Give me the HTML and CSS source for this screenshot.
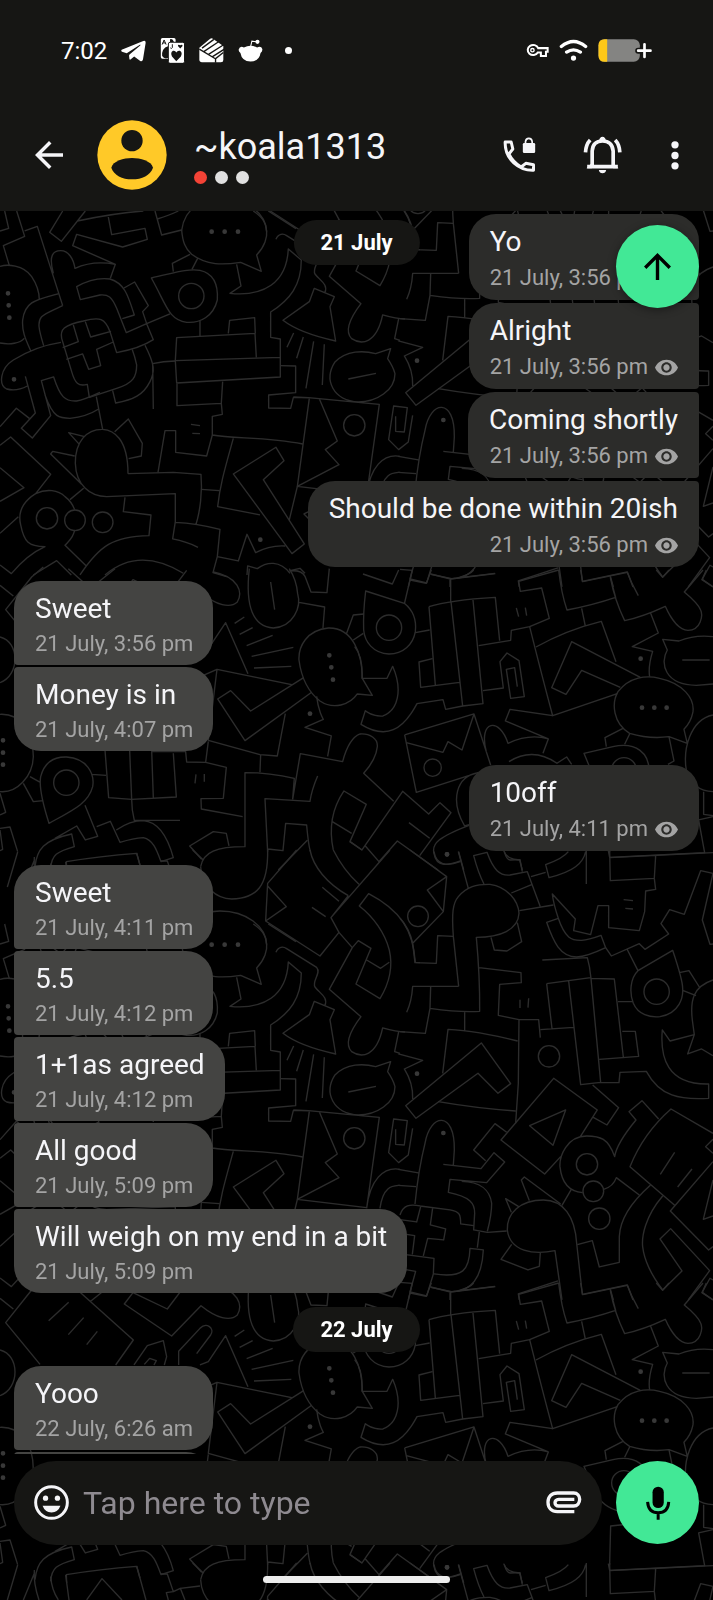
FILE: index.html
```
<!DOCTYPE html>
<html lang="en">
<head>
<meta charset="utf-8">
<meta name="viewport" content="width=device-width, initial-scale=1">
<title>~koala1313</title>
<link rel="stylesheet" href="styles.css">
</head>
<body>
<svg class="wallpaper" aria-hidden="true">
  <defs>
    <g id="doodles" class="doodles">
      <g transform="translate(0 205) scale(.3333)">
        <path d="M50 18L74 94L10 122L28 182M14 18L26 70L0 78M74 78L112 64L188 302M188 18L149 82L184 109L256 18M232 48Q340 25 430 18M465 18L485 90L545 75M472 42Q510 30 535 18M325 36L335 89L435 70L442 103L368 126L230 88L218 122L346 178L331 220M160 205C145 150 160 137 182 137C205 137 220 160 225 190Q280 165 346 178"/>
        <path d="M545 75C548 110 555 130 575 148C620 182 670 180 722 172L784 199L770 150C795 125 802 95 800 80C798 50 785 35 760 18M570 148L517 175L520 200M593 160L576 193M710 178L723 243L690 265C790 275 860 235 865 132L904 165C904 240 870 285 812 321L812 397L841 402L841 516L530 534L526 467L530 398L765 385M526 467L841 457M765 385L769 457M685 385L689 346L764 338L766 385M600 347L600 392"/>
        <path d="M454 219C520 205 560 190 600 196C640 205 655 240 652 285C640 335 600 355 560 352C505 345 500 300 454 219Z"/><circle cx="574" cy="273" r="38"/>
        <path d="M372 249L404 231L445 302L428 320L440 356L379 383L350 310C335 275 325 268 300 270L241 284L230 245C265 225 300 218 330 222C375 235 385 275 403 330L367 341M440 356L510 327M440 356L460 404Q420 430 350 443L330 380C315 340 300 335 250 348C190 360 180 375 185 400L215 500C225 535 235 545 262 538L268 577L350 550C400 535 410 515 410 480Q405 455 397 434M435 421C465 480 465 500 450 530C430 570 400 585 347 594L338 557M460 612L458 476Q490 468 526 468"/>
        <path d="M531 536L531 602L664 595L668 530M664 595L667 628L637 634L637 690L620 753L527 742L527 677L495 677L474 802M573 658L600 662M577 685L600 686M637 690C700 702 800 695 908 717M841 482L887 483L887 563L806 570L806 609L872 610L880 578L925 578M928 580L892 845L868 945M700 700C675 790 660 840 653 905L780 930M828 727L852 767L790 824L913 1017L876 1046L700 807ZM604 853L658 857"/>
        <path d="M384 806C384 700 340 675 308 673C260 672 225 710 226 775C228 840 270 875 320 875L526 866L526 950L518 1002Q560 1010 594 1027M384 806L520 802L603 808C608 860 600 920 588 958M526 952Q590 955 660 973L652 1055L715 1068L741 988L767 1043Q810 1020 856 1023M652 1055L639 1103L680 1115M254 695L206 683L236 716M224 753L158 739L152 747L245 838M344 680L385 642L427 715L424 753L386 761M308 673L289 575"/>
        <path d="M92 437C78 405 65 380 68 345C75 290 105 285 176 266M131 422C115 370 112 350 125 335C135 325 160 315 188 302M0 184C20 178 70 178 95 215C115 245 118 265 118 285M0 414C30 420 60 415 73 400M183 412C130 420 80 440 40 465C0 490 -5 540 20 552Q50 560 82 543M76 514L106 624L64 670L97 699L152 632L124 527L161 516C180 575 195 590 230 588Q250 585 300 562M135 570C160 640 180 640 210 640Q260 635 296 612M220 360L235 410L188 428M199 463L248 447L266 493L302 482L290 433L340 411M256 350L272 396L333 379"/>
        <path d="M0 665L49 610L89 641M0 721L32 696L152 808L107 866M0 788L72 848L0 889M107 866C140 850 175 855 195 875Q215 890 224 914M107 866C60 895 55 930 62 960C72 1010 85 1025 135 1025C90 1045 60 1075 34 1106L0 1080M224 975C220 1000 205 1010 195 1021L259 1083M210 884L251 850M55 935L0 985M375 877L370 920L453 930L447 992C340 995 300 1020 240 1110M100 1110L170 1067L214 1110M315 1110C380 1055 460 1050 550 1105M741 1110L743 1083L772 1091C800 1070 840 1065 870 1105M870 1097L900 1090L915 1105M960 975L912 927L937 915M805 18L888 71"/>
        <circle cx="141" cy="940" r="32"/><circle cx="225" cy="946" r="31"/><circle cx="308" cy="952" r="31"/>
        <path d="M828 103C835 85 850 85 860 92L950 148C965 165 935 190 945 207C960 227 985 237 975 262M943 250L928 290L849 346Q900 385 1007 408L990 305L1003 275ZM881 384L861 427M910 396L890 460M941 409L918 550M973 418L967 540"/>
        <path class="dots" d="M635 80h.1M674 80h.1M714 80h.1M24 265h.1M26 301h.1M28 338h.1M42 523h.1M781 1004h.1"/>
      </g>
      <g transform="translate(0 137) scale(.3333)">
        <path d="M545 280C555 205 620 183 660 183C740 183 798 230 800 284M1168 337L1142 355L1100 330M1057 293L1075 272L1113 295L1068 402L1140 446C1180 380 1175 330 1168 300C1155 250 1120 200 1078 168L1106 131C1200 180 1240 240 1246 337L1260 338M1017 247L1057 293L988 418L1083 500C1045 550 1035 585 1055 605C1085 625 1130 620 1148 534Q1190 546 1215 546M1045 137L993 203L1017 247L960 318L797 213L803 100L890 0M803 108L859 170L797 213M993 203L1170 0M967 112L1017 154M936 172L977 200M930 0C940 50 980 100 1045 137M1000 0Q1030 60 1077 103"/>
        <path d="M1196 546L1184 605L1200 610M1172 635L1127 650C1090 640 1040 640 1005 675C970 730 1000 790 1075 795C1130 795 1185 760 1185 710Q1180 690 1163 665ZM1045 726L1128 709M880 780L925 782L1138 802L1100 1075M958 785L1012 912L976 938L1017 983L892 1048L1100 1073M1187 838L1187 883L1213 885L1222 812L1181 807L1166 908L1196 938L1225 915L1238 835M1100 1075C1110 990 1150 950 1200 958M1140 1075C1150 1005 1180 1008 1200 1006"/>
        <circle cx="1063" cy="865" r="32"/>
        <path d="M803 0C805 110 770 145 695 147C650 147 605 110 602 50M578 0L610 30"/>
      </g>
      <g id="doodles-right" transform="translate(400 850) scale(.3333)">
        <path d="M30 0L140 80L130 185L38 280M140 80L82 120L130 185M0 205Q28 235 38 280L45 338L109 340L113 257L160 259M102 5C108 45 140 50 180 35M175 5L205 115M252 102Q235 70 221 17L261 7C280 60 300 78 330 75L382 65L421 170M313 5Q320 30 330 30L360 29L367 65M334 129L395 104M393 80L437 67M505 5Q490 25 437 44L447 83C520 65 550 40 557 5M559 0L559 102M629 0L631 92L763 85L767 18M629 23L939 8"/>
        <circle cx="54" cy="199" r="31"/>
        <path d="M763 85L767 118L737 123L734 185L718 242L626 233L626 167L594 167L572 254L521 242L526 207L457 132Q460 160 475 205C495 265 515 272 545 271Q565 270 603 256L617 293L634 318L718 281L735 298L806 252L783 221L809 179L853 193L902 62L939 70M671 149L699 152M676 175L699 177M939 70L907 210L930 283L939 282M475 205L440 217C460 275 480 320 530 321Q560 320 617 293M358 182L460 165"/>
        <path d="M176 409L160 259C155 190 158 160 175 140C200 110 230 102 270 103C320 110 355 150 357 190C355 240 300 262 229 262Q240 380 239 484Q180 488 90 475L92 410M176 409L38 409Q35 455 20 487M90 475L76 550L0 545M194 486L194 541M273 262L283 300L321 303L365 275L352 218M237 353L363 368L364 398L299 403L295 496L357 509L416 509L421 563M360 449L360 474M386 445L384 473M357 509L355 700L347 820M128 670L144 538Q230 542 353 573M115 755Q230 775 347 783M17 767L244 579L332 701L294 730L234 670L48 805ZM-5 612L68 631L13 657Q40 700 38 747"/>
        <path d="M427 330L562 323Q570 350 573 385L643 387L670 621M440 401L572 383M440 401L456 535M421 539L521 532M506 393L542 704L602 697L573 385M598 628L716 619L706 544L667 544M602 698L657 698L660 667L739 664C780 740 840 750 926 745L926 702C800 705 780 620 787 540L810 573L883 554M654 455L699 455M681 297L714 362M818 301L714 362C690 385 688 430 700 460C715 495 750 503 780 500C840 490 850 440 848 415Q848 390 818 301ZM838 368L867 362L900 414M850 422L888 437M939 390C880 410 870 450 877 510L883 554L863 612L905 597L939 617"/>
        <circle cx="447" cy="619" r="32"/><circle cx="770" cy="425" r="38"/>
        <path d="M541 860L592 780L461 685L303 870L434 972L482 920M497 780L459 886L389 827ZM578 705L656 773L621 825L580 802M776 807L726 752L687 785L708 810Q650 880 644 920C625 865 600 858 560 858C500 858 478 920 480 950C485 1000 510 1025 548 1028M611 1018Q640 1010 649 983L718 1035M939 850L813 777Q730 850 690 950L824 1066M824 907L781 973M876 957L833 1011M939 935L811 1083L926 1200L939 1190M939 990L910 1108L939 1098M939 868L917 890L939 910M751 1006C690 1060 660 1110 658 1160L658 1237L598 1251L577 1172L532 1184M788 1038C735 1100 725 1160 728 1190Q735 1250 788 1320L846 1263L780 1167L812 1136L929 1262L865 1350M939 1290L930 1285L906 1328L939 1350"/>
        <circle cx="561" cy="943" r="32"/><circle cx="580" cy="1024" r="31"/><circle cx="598" cy="1106" r="32"/>
        <path d="M486 1350L465 1202C400 1215 330 1205 322 1140C320 1090 360 1050 430 1050C490 1050 525 1100 530 1180L547 1333L682 1305L699 1350M474 1293L355 1332L358 1350M631 1318L640 1350M486 1066L514 1018M388 1052L364 990L373 981L482 1062M334 1087L317 1046L356 1070M335 1183L303 1228L384 1260L418 1249L421 1209M320 847L285 821L221 900L257 932"/>
        <path d="M45 1062Q55 960 75 880C90 790 165 780 163 900L160 945M130 943L243 956L282 908L314 936L260 998L150 988L145 1027C210 1040 225 1060 224 1090L221 1140L262 1147L320 1143M185 994C240 995 270 1020 275 1060Q275 1095 262 1144M-5 958L55 969M-5 1006L48 1010M0 1095C10 1065 30 1062 60 1068L150 1080C180 1085 182 1095 182 1122L221 1127M0 1109L50 1116L62 1070M98 1074L91 1125L137 1137L131 1170L83 1165L70 1218M0 1150L44 1157L37 1213M0 1212L102 1225L100 1272L80 1338L30 1326L47 1264L0 1256M238 1146L232 1193M102 1272C190 1285 208 1260 210 1195L250 1200C245 1300 200 1325 155 1325L93 1312M155 1325L285 1309M150 1328L150 1350M0 1297L37 1300L25 1350"/>
        <path class="dots" d="M141 13h.1M51 671h.1M130 849h.1"/>
      </g>
      <g transform="translate(0 567) scale(.3333)">
        <path d="M0 55L40 87M120 253L17 128L95 30L130 0M205 5L400 180L347 255M270 65L345 5M206 67L146 122M251 113L205 164M292 154L260 194M560 10L502 87L399 38L373 72L515 168L603 77C650 115 690 125 712 105C730 75 715 30 640 15M536 255L536 214L600 145C620 125 645 145 632 165L590 221M402 255L442 197L490 182L500 230L493 255M433 253L449 235L469 242L462 255M0 210C60 225 60 325 0 347M600 255L625 245L677 167L744 320M733 150L704 169M758 182L719 202M818 205L740 236M880 241L755 268M874 298L762 303M610 325L651 307L875 353M651 307L625 520L780 563L832 567L856 440M911 332L752 432L692 371L653 396L735 521L935 376M950 388Q955 430 970 457L915 481L994 507L983 568"/>
        <path d="M748 5C735 120 760 180 820 183C880 180 905 120 893 80Q890 40 868 5M812 45L824 128M868 12Q905 8 915 28L933 75L981 77L988 5M897 106L974 120L969 183"/>
        <path d="M53 855L22 960M103 870Q100 910 117 960M103 880L70 960M152 890Q155 930 175 960M197 885L207 960M410 858L438 960M260 960L306 896L366 960M483 882L502 882L520 935L499 938L505 960M520 935L541 925L555 960M541 925L600 918"/>
        <path class="dots" d="M930 440h.1M988 265h.1M994 301h.1M999 338h.1"/>
      </g>
      <g transform="translate(0 570) scale(.3333)">
        <path d="M1040 190L1060 135L1092 132M1060 210L1090 190M1087 325C1087 255 1060 172 985 174C920 180 895 230 897 270C905 330 930 370 960 393C1000 420 1050 405 1072 372L1117 376L1087 325M0 433C60 430 100 480 100 560C98 620 50 670 0 665M90 620L121 637M70 640L100 695L130 692M147 760Q115 660 122 620C135 570 170 560 200 561C260 565 285 610 278 650C265 700 220 720 147 760ZM275 613L318 616M315 540L326 683L395 688L529 681L520 550M389 540L395 688Q395 720 403 751L540 751M455 540L460 683M455 545L557 545L560 576L617 577L625 514M617 577L679 592L670 685L603 686L604 717L728 740M588 613L585 640M613 612L613 635M782 555L780 607"/>
        <circle cx="199" cy="638" r="38"/>
        <path d="M602 890C610 845 650 830 735 830L735 608Q810 608 883 625L878 688M803 845L795 686L930 694Q935 660 953 618M878 688L901 551L1028 575C1040 530 1060 500 1080 492M605 868L569 828L640 785L679 790L687 828M803 837L849 842L857 760L920 765C925 820 927 835 932 845M835 900L922 811M255 706L293 799L256 810L230 768L165 805M290 770L331 754L360 817Q400 805 430 803C460 810 470 840 483 875L520 863C500 790 470 755 430 752Q390 752 349 780M105 890C110 840 130 810 215 792L223 830C170 845 155 855 152 895M200 900L199 875Q300 858 410 850L420 885M0 670L17 727L0 735M0 775L30 771L53 845M0 780L8 838L0 842"/>
        <path d="M1000 840C985 770 1000 710 1032 663L1099 703L1050 815L1086 840M997 755L1055 790"/>
        <path class="dots" d="M9 511h.1M9 548h.1M9 584h.1"/>
      </g>
      <g transform="translate(353 570) scale(.3333)">
        <path d="M38 63L154 100C185 125 190 160 187 185C180 225 150 252 108 252C60 250 35 215 32 180Q30 130 38 63ZM30 12L118 42L137 0M178 0L154 102M172 30L220 40L235 0M233 12L293 27L427 11M310 25Q350 15 362 0M293 27L293 95M228 110Q290 90 427 82L440 212M228 110L247 345M294 95L329 408L390 401L360 90M187 188L230 180M377 227L473 211L475 181L530 170L589 145L566 54L502 64L497 34L617 0M490 114L497 140M517 113L521 137M238 266L198 276L203 352L320 337M390 362L451 354L441 275L462 249L498 272L514 380L473 385L460 298L485 293L493 350"/>
        <circle cx="108" cy="173" r="38"/>
        <path d="M617 0Q625 70 642 120Q720 105 788 82L772 22M683 0L689 35L823 7Q835 40 856 77M772 22Q785 90 815 152Q870 140 937 109C955 150 980 180 1005 181C1045 180 1050 135 1043 120Q1035 100 994 66L1050 0M910 0L929 22L948 0M1060 0L1048 28L1080 50M686 115L697 168M530 170Q570 330 599 437L793 371M549 231Q640 180 745 154L789 275M862 322L656 215L596 353L639 373L686 301L802 352M893 130L916 189L838 230L899 244Q885 290 890 320M1080 200C1040 195 1010 200 978 213L929 208L943 240C920 280 935 345 1030 346L1080 342M988 270L1070 270"/>
        <path d="M830 490C780 460 775 400 795 365C830 320 880 315 920 325C990 340 1025 385 1020 425Q1015 455 993 478L1003 520L948 500Q890 508 830 490ZM1080 435C1010 450 990 540 1000 600C1010 640 1040 665 1080 665M810 475L756 503L760 530M830 492L815 523M948 500L963 573L945 583M745 655Q720 620 693 550L780 530C850 515 890 550 888 605C880 660 840 690 790 682Q765 675 745 655"/>
        <circle cx="813" cy="600" r="37"/>
        <path d="M5 230Q30 260 27 325L102 325L119 289C150 360 135 420 90 438Q60 440 37 422L24 463C100 510 150 480 192 401L270 389L278 418L329 408M21 492C50 490 75 505 73 530C70 560 50 590 32 610L122 694M155 495L363 432L413 585M155 495L190 667L375 608M160 518L270 547L285 515L327 540L363 432M400 545C375 450 440 440 465 520Q530 490 586 507L570 550M468 575Q540 530 612 580L641 561L656 583M599 437L471 418L457 453L586 507M348 764L335 768C290 690 310 620 375 608"/>
        <circle cx="239" cy="593" r="26"/>
        <path d="M-9 815L27 840L149 664L227 732L261 698L294 728L200 857M168 758L230 805M37 828L78 875L133 813L255 900M348 766C260 800 235 820 243 850C250 895 290 885 322 873M317 845L332 900M452 842Q460 868 500 870L508 900M1080 740L1037 750L1055 848L770 862L766 842M1052 665L1052 733L1080 737M770 845L773 729L830 723"/>
        <path class="dots" d="M863 266h.1M867 413h.1M904 413h.1M941 413h.1M282 853h.1"/>
      </g>
    </g>
    <pattern id="tile" width="713" height="713" patternUnits="userSpaceOnUse">
      <use href="#doodles"/>
      <use href="#doodles" y="-713"/>
    </pattern>
  </defs>
  <rect width="100%" height="100%" fill="url(#tile)"/>
</svg>

<div class="app">
  <header class="header">
    <div class="status">
      <time class="clock">7:02</time>
      <svg class="st-app" viewBox="368 118 74 74"><path fill="#fff" d="M370 153Q367 156 371 159L385 163L424 138Q427 137 425 140L395 165Q391 168 392 172L393 180Q394 184 397 181L407 173L425 186Q431 189 433 182L441 132Q441 124 434 127Z"/></svg>
      <svg class="st-app" viewBox="482 115 75 76"><rect x="484" y="115" width="45" height="63" rx="5" fill="#fff"/><path d="M488 135L494 121L500 135M490 130H498" fill="none" stroke="#161614" stroke-width="3"/><path d="M488 170Q486 146 506 140V176Q494 180 488 170ZM512 119Q520 116 524 127H512Z" fill="#161614"/><rect x="507" y="128" width="49" height="64" rx="5" fill="#fff" stroke="#161614" stroke-width="3"/><path fill="#161614" d="M531 186L518 171Q512 159 521 154Q528 152 531 159Q535 152 542 154Q551 159 545 171ZM543 147L536 139Q536 133 543 137Q550 133 550 139Z"/><path d="M519 134V144Q517 149 513 145" fill="none" stroke="#161614" stroke-width="3"/></svg>
      <svg class="st-app" viewBox="597 117 74 74"><path fill="#fff" d="M598 146L630 119Q634 117 638 119L669 141V182Q669 189 662 189H606Q598 189 598 181Z"/><path d="M598 150L648 180M610 158L655 128M624 166L670 137M636 173L672 150M606 147L641 121M669 160L646 178V190" fill="none" stroke="#161614" stroke-width="4"/></svg>
      <svg class="st-app" viewBox="713 117 72 72"><path fill="#fff" d="M715 150Q718 139 730 144Q749 135 768 144Q780 139 783 149Q784 155 778 160Q774 184 749 185Q724 184 720 160Q714 156 715 150Z"/><path d="M749 143L753 126L768 128" fill="none" stroke="#fff" stroke-width="3"/><circle cx="769" cy="128" r="6" fill="#fff"/></svg>
      <span class="more-dot"></span>
      <span class="spacer"></span>
      <svg class="st-key" viewBox="526 132 68 44"><path fill="none" stroke="#fff" stroke-width="6" d="M562 147H590V158H585V170H570V160H561A16 15 0 1 1 562 147Z"/><circle cx="545" cy="153" r="5" fill="none" stroke="#fff" stroke-width="4"/></svg>
      <svg class="st-wifi" viewBox="620 118 86 70"><path fill="none" stroke="#fff" stroke-width="10" stroke-linecap="round" d="M626 141Q663 110 700 141M642 158Q663 144 684 158"/><circle cx="663" cy="176" r="8" fill="#fff"/></svg>
      <svg class="st-bat" viewBox="737 118 161 69"><rect x="738" y="119" width="124" height="67" rx="18" fill="#848482"/><path fill="#fec818" d="M764 119V186H756Q738 186 738 168V137Q738 119 756 119Z"/><path d="M857 153H894M876 134V172" stroke="#161614" stroke-width="18" stroke-linecap="round"/><path d="M857 153H894M876 134V172" stroke="#fff" stroke-width="8" stroke-linecap="round"/></svg>
    </div>
    <div class="toolbar">
      <button class="icon-btn back" aria-label="Back"><svg viewBox="4 4 16 16"><path fill="currentColor" d="M20 11H7.83l5.59-5.59L12 4l-8 8 8 8 1.41-1.41L7.83 13H20v-2z"/></svg></button>
      <svg class="avatar" viewBox="290 362 210 210"><circle cx="395" cy="467" r="104" fill="#ffc928"/><circle cx="395" cy="424" r="32" fill="#161614"/><path fill="#161614" d="M333 505C338 485 370 476 395 476S453 485 458 505C450 528 425 540 395 540S341 528 333 505Z"/></svg>
      <div class="who">
        <h1>~koala1313</h1>
        <div class="level"><i class="on"></i><i></i><i></i></div>
      </div>
      <button class="icon-btn call" aria-label="Secure call"><svg viewBox="448 406 98 108"><path fill="none" stroke="currentColor" stroke-width="9" stroke-linejoin="round" d="M454 421H472L477 442L465 457Q478 483 502 496L516 485L539 489V506Q505 507 480 484Q453 458 454 421Z"/><rect x="507" y="424" width="37" height="30" rx="4" fill="currentColor"/><path d="M515 427V420Q516 410 525 410T535 420V427" fill="none" stroke="currentColor" stroke-width="5"/></svg></button>
      <button class="icon-btn bell" aria-label="Notifications"><svg viewBox="688 410 116 114"><path fill="none" stroke="currentColor" stroke-width="11" d="M700 502H792M715 502V455Q717 425 746 425T778 455V502M695 459Q696 436 709 422M798 459Q797 436 784 422"/><path fill="currentColor" d="M736 423Q738 412 746 412T756 423ZM698 507L714 490V507ZM794 507L778 490V507ZM735 512H757Q755 522 746 522T735 512Z"/></svg></button>
      <button class="icon-btn more" aria-label="More options"><svg viewBox="954 424 24 86"><g fill="currentColor"><circle cx="966" cy="435" r="11"/><circle cx="966" cy="467" r="11"/><circle cx="966" cy="498" r="11"/></g></svg></button>
    </div>
  </header>

  <div class="chat">
    <div class="date sticky">21 July</div>
    <button class="round up" aria-label="Jump up"><svg viewBox="4 4 16 16"><path fill="currentColor" d="M4 12l1.41 1.41L11 7.83V20h2V7.83l5.58 5.59L20 12l-8-8-8 8z"/></svg></button>
    <main class="messages">
      <section class="group out">
        <article class="msg"><p>Yo</p><footer>21 July, 3:56 pm <svg class="eye" viewBox="1 4 22 16"><use href="#eye"/></svg></footer></article>
        <article class="msg"><p>Alright</p><footer>21 July, 3:56 pm <svg class="eye" viewBox="1 4 22 16"><use href="#eye"/></svg></footer></article>
        <article class="msg"><p>Coming shortly</p><footer>21 July, 3:56 pm <svg class="eye" viewBox="1 4 22 16"><use href="#eye"/></svg></footer></article>
        <article class="msg"><p>Should be done within 20ish</p><footer>21 July, 3:56 pm <svg class="eye" viewBox="1 4 22 16"><use href="#eye"/></svg></footer></article>
      </section>
      <section class="group in">
        <article class="msg"><p>Sweet</p><footer>21 July, 3:56 pm</footer></article>
        <article class="msg"><p>Money is in</p><footer>21 July, 4:07 pm</footer></article>
      </section>
      <section class="group out">
        <article class="msg"><p>10off</p><footer>21 July, 4:11 pm <svg class="eye" viewBox="1 4 22 16"><path id="eye" fill="currentColor" d="M12 4.5C7 4.5 2.73 7.61 1 12c1.73 4.39 6 7.5 11 7.5s9.27-3.11 11-7.5c-1.73-4.39-6-7.5-11-7.5zM12 17c-2.76 0-5-2.24-5-5s2.24-5 5-5 5 2.24 5 5-2.24 5-5 5zm0-8c-1.66 0-3 1.34-3 3s1.34 3 3 3 3-1.34 3-3-1.34-3-3-3z"/></svg></footer></article>
      </section>
      <section class="group in">
        <article class="msg"><p>Sweet</p><footer>21 July, 4:11 pm</footer></article>
        <article class="msg"><p>5.5</p><footer>21 July, 4:12 pm</footer></article>
        <article class="msg"><p>1+1as agreed</p><footer>21 July, 4:12 pm</footer></article>
        <article class="msg"><p>All good</p><footer>21 July, 5:09 pm</footer></article>
        <article class="msg"><p>Will weigh on my end in a bit</p><footer>21 July, 5:09 pm</footer></article>
      </section>
      <div class="date">22 July</div>
      <section class="group in">
        <article class="msg"><p>Yooo</p><footer>22 July, 6:26 am</footer></article>
        <article class="msg"></article>
      </section>
    </main>
  </div>

  <footer class="bottom">
    <form class="composer">
      <div class="field">
        <button type="button" class="icon-btn emoji" aria-label="Emoji"><svg viewBox="102 611 106 106"><circle cx="155" cy="664" r="48" fill="none" stroke="currentColor" stroke-width="9"/><circle cx="137" cy="651" r="8" fill="currentColor"/><circle cx="173" cy="651" r="8" fill="currentColor"/><path fill="currentColor" d="M128 674H182Q175 694 155 694T128 674Z"/></svg></button>
        <input type="text" placeholder="Tap here to type" aria-label="Message">
        <button type="button" class="icon-btn attach" aria-label="Attach"><svg viewBox="580 629 108 69"><path fill="none" stroke="currentColor" stroke-width="10" d="M665 691H614C597 691 586 680 586 663S597 635 614 635H663C674 635 681 643 681 654S674 674 663 674H618C611 674 607 669 607 664S611 654 618 654H665"/></svg></button>
      </div>
      <button type="button" class="round mic" aria-label="Record"><svg viewBox="876 621 77 103"><rect x="898" y="623" width="34" height="65" rx="17" fill="currentColor"/><path d="M883 669Q885 702 915 702T947 669M915 702V723" fill="none" stroke="currentColor" stroke-width="9"/></svg></button>
    </form>
    <div class="handle"></div>
  </footer>
</div>
</body>
</html>
```
FILE: styles.css
```
* { box-sizing: border-box; }

body {
  margin: 0;
  background: #000;
  color: #f5f5f8;
  font-family: Roboto, "Noto Sans", sans-serif;
}

h1, p { margin: 0; font-weight: 400; }

button {
  border: 0;
  padding: 0;
  background: none;
  color: inherit;
}

svg { display: block; flex: none; }

.wallpaper {
  position: fixed;
  inset: 0;
  width: 100%;
  height: 100%;
}

.doodles {
  fill: none;
  stroke: #2c2c2c;
  stroke-width: 4;
  stroke-linejoin: round;
}

.dots {
  stroke: #383838;
  stroke-width: 14;
  stroke-linecap: round;
}

.app {
  position: relative;
  display: flex;
  flex-direction: column;
  height: 100vh;
}

/* Header */
.header { background: #161614; padding-bottom: 2px; }

.status {
  display: flex;
  align-items: center;
  gap: 14px;
  height: 101px;
  padding: 0 61px;
}

.clock { font-size: 24px; color: #fff; }
.st-app { width: 25px; height: 25px; }
.more-dot { width: 7px; height: 7px; margin-left: 8px; border-radius: 50%; background: #fff; }
.spacer { flex: 1; }
.st-key { width: 23px; height: 15px; }
.st-wifi { width: 29px; height: 23px; margin: 0 -4px; }
.st-bat { width: 54px; height: 23px; }

.toolbar {
  display: flex;
  align-items: center;
  height: 108px;
  padding: 0 6px 0 14px;
}

.icon-btn {
  display: flex;
  align-items: center;
  justify-content: center;
  flex: none;
}

.back { width: 69px; height: 69px; }
.back svg { width: 28px; height: 28px; }
.avatar { width: 70px; height: 70px; margin-left: 14px; }
.who { flex: 1; padding-left: 27px; }
.who h1 { font-size: 36px; line-height: 40px; }

.level { display: flex; gap: 8px; padding-top: 4px; }
.level i { width: 13px; height: 13px; border-radius: 50%; background: #e0e0e0; }
.level .on { background: #f44336; }

.call { width: 84px; height: 84px; }
.call svg { width: 33px; height: 36px; }
.bell { width: 82px; height: 84px; }
.bell svg { width: 39px; height: 38px; }
.more { width: 64px; height: 84px; }
.more svg { width: 8px; height: 29px; }

/* Conversation */
.chat {
  position: relative;
  flex: 1;
  min-height: 0;
}

.messages {
  display: flex;
  flex-direction: column;
  gap: 14px;
  height: 100%;
  padding: 3px 14px 0;
  overflow: hidden;
}

.group { display: flex; flex-direction: column; flex: none; }
.group.out { align-items: flex-end; gap: 3px; }
.group.in { align-items: flex-start; gap: 2px; }

.msg {
  min-height: 84px;
  padding: 10px 20px 7px 21px;
  border-radius: 27px;
  font-size: 28px;
  line-height: 36px;
}

.in .msg { min-width: 199px; background: #444442; }
.out .msg { min-width: 230px; padding-right: 21px; background: #2c2c2a; }
.in .msg:not(:first-child) { border-top-left-radius: 4px; }
.in .msg:not(:last-child) { border-bottom-left-radius: 4px; }
.out .msg:not(:first-child) { border-top-right-radius: 4px; }
.out .msg:not(:last-child) { border-bottom-right-radius: 4px; }

.msg footer {
  display: flex;
  align-items: center;
  gap: 7px;
  padding-top: 3px;
  color: #a4a4a4;
  font-size: 22px;
  line-height: 28px;
}

.out .msg footer { justify-content: flex-end; line-height: 30px; }
.eye { width: 23px; height: 17px; }

.date {
  flex: none;
  align-self: center;
  height: 45px;
  padding: 0 27px;
  border-radius: 23px;
  background: #161614;
  color: #fff;
  font-size: 22px;
  font-weight: 700;
  line-height: 46px;
}

.sticky {
  position: absolute;
  z-index: 1;
  top: 9px;
  left: 50%;
  transform: translateX(-50%);
}

.round {
  display: flex;
  align-items: center;
  justify-content: center;
  flex: none;
  width: 83px;
  height: 83px;
  border-radius: 50%;
  background: #42e896;
  color: #000;
}

.up {
  position: absolute;
  z-index: 1;
  top: 14px;
  right: 14px;
  box-shadow: 0 2px 8px #0006;
}

.up svg { width: 27px; height: 27px; }
.mic svg { width: 26px; height: 34px; }

/* Composer */
.bottom { padding: 7px 14px 17px; }
.composer { display: flex; gap: 14px; }

.field {
  display: flex;
  align-items: center;
  flex: 1;
  min-width: 0;
  height: 84px;
  padding: 0 20px 2px;
  border-radius: 42px;
  background: #161614;
}

.emoji svg { width: 35px; height: 35px; }
.attach svg { width: 36px; height: 23px; }

.field input {
  flex: 1;
  min-width: 0;
  padding: 2px 0 0 14px;
  border: 0;
  outline: 0;
  background: none;
  color: #f5f5f8;
  font: 400 32px/40px Roboto, "Noto Sans", sans-serif;
}

.field input::placeholder { color: #8e8a90; opacity: 1; }

.handle {
  width: 187px;
  height: 7px;
  margin: 31px auto 0;
  border-radius: 4px;
  background: #ededed;
}
```
